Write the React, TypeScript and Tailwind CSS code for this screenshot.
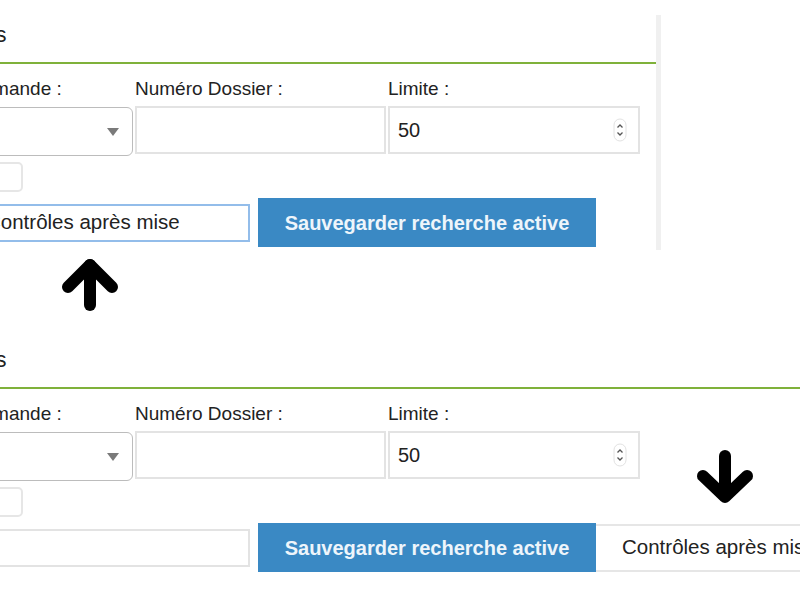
import React from "react";

const ArrowIcon = ({ dir }: { dir: "up" | "down" }) => (
  <svg width="62" height="58" viewBox="0 0 62 58" fill="none" stroke="#000" strokeWidth="12" strokeLinecap="round" strokeLinejoin="round">
    {dir === "up" ? (
      <>
        <path d="M31 9 V49" />
        <path d="M9 31 L31 9 L53 31" />
      </>
    ) : (
      <>
        <path d="M31 8 V48" />
        <path d="M9 28 L31 49 L53 28" />
      </>
    )}
  </svg>
);

const SelectCaret = () => (
  <svg width="12" height="8" viewBox="0 0 12 8">
    <path d="M0 0 H12 L6 8 Z" fill="#7a7a7a" />
  </svg>
);

const Spinner = () => (
  <svg width="14" height="24" viewBox="0 0 14 24" fill="none">
    <rect x="1" y="1" width="12" height="22" rx="6" stroke="#e2e2e2" />
    <path d="M4.5 9.5 L7 7 L9.5 9.5" stroke="#555" strokeWidth="1.3" />
    <path d="M4.5 14.5 L7 17 L9.5 14.5" stroke="#555" strokeWidth="1.3" />
  </svg>
);

const SearchPanel = ({ focused, extra }: { focused: boolean; extra: boolean }) => {
  return (
    <div className="w-full">
      {/* Title */}
      <div className="h-[49px] pt-[7px] border-b-2 border-[#7fb13a]">
        <div className="ml-[-111px] text-[22px] leading-[26px] text-[#222] whitespace-nowrap">Recherches</div>
      </div>

      {/* Fields */}
      <div className="mt-[14px] ml-[-47px] flex items-start gap-[2px]">
        <div className="w-[180px] shrink-0 flex flex-col">
          <label className="text-[19px] leading-[22px] whitespace-nowrap">Commande :</label>
          <div className="mt-[7px] h-[49px] rounded-[6px] border-[1.5px] border-[#bcbcbc] bg-white flex items-center justify-end pr-[13px]">
            <SelectCaret />
          </div>
        </div>
        <div className="w-[251px] shrink-0 flex flex-col">
          <label className="text-[19px] leading-[22px] whitespace-nowrap">Numéro Dossier :</label>
          <div className="mt-[6px] h-[48px] border-2 border-[#e3e3e3] bg-white" />
        </div>
        <div className="w-[252px] shrink-0 flex flex-col">
          <label className="text-[19px] leading-[22px] whitespace-nowrap">Limite :</label>
          <div className="mt-[6px] h-[48px] border-2 border-[#e3e3e3] bg-white flex items-center justify-between pl-[8px] pr-[11px]">
            <span className="text-[20px] text-[#222]">50</span>
            <Spinner />
          </div>
        </div>
      </div>

      {/* Checkbox */}
      <div className="mt-[6px] ml-[-17px] w-[40px] h-[30px] rounded-[5px] border-2 border-[#e6e6e6]" />

      {/* Actions */}
      <div className="mt-[6px] ml-[-40px] flex items-center">
        <div
          className={
            focused
              ? "w-[290px] h-[38px] shrink-0 border-2 border-[#93bdea] bg-white pl-[24px] flex items-center text-[20.5px] text-[#222] whitespace-nowrap overflow-hidden"
              : "w-[290px] h-[38px] shrink-0 border-2 border-[#e3e3e3] bg-white"
          }
        >
          {focused ? "Contrôles après mise" : null}
        </div>
        <button className="ml-[8px] w-[338px] h-[49px] shrink-0 bg-[#3a89c4] text-[#eef5fb] font-bold text-[20px] whitespace-nowrap">
          Sauvegarder recherche active
        </button>
        {extra && (
          <div className="w-[240px] h-[48px] shrink-0 border-y-2 border-[#e6e6e6] pl-[26px] flex items-center text-[20.5px] text-[#222] whitespace-nowrap">
            Contrôles après mise
          </div>
        )}
      </div>
    </div>
  );
};

export default function App() {
  return (
    <div className="relative w-[800px] h-[600px] overflow-hidden bg-white font-['Liberation_Sans',Arial,sans-serif] text-[#222]">
      {/* Before */}
      <div className="mt-[15px] w-[661px] h-[235px] border-r-[5px] border-[#f0f0f0]">
        <SearchPanel focused={true} extra={false} />
      </div>

      {/* After */}
      <div className="mt-[90px] w-[800px]">
        <SearchPanel focused={false} extra={true} />
      </div>

      <div className="absolute left-[59px] top-[256px]">
        <ArrowIcon dir="up" />
      </div>
      <div className="absolute left-[694px] top-[448px]">
        <ArrowIcon dir="down" />
      </div>
    </div>
  );
}
